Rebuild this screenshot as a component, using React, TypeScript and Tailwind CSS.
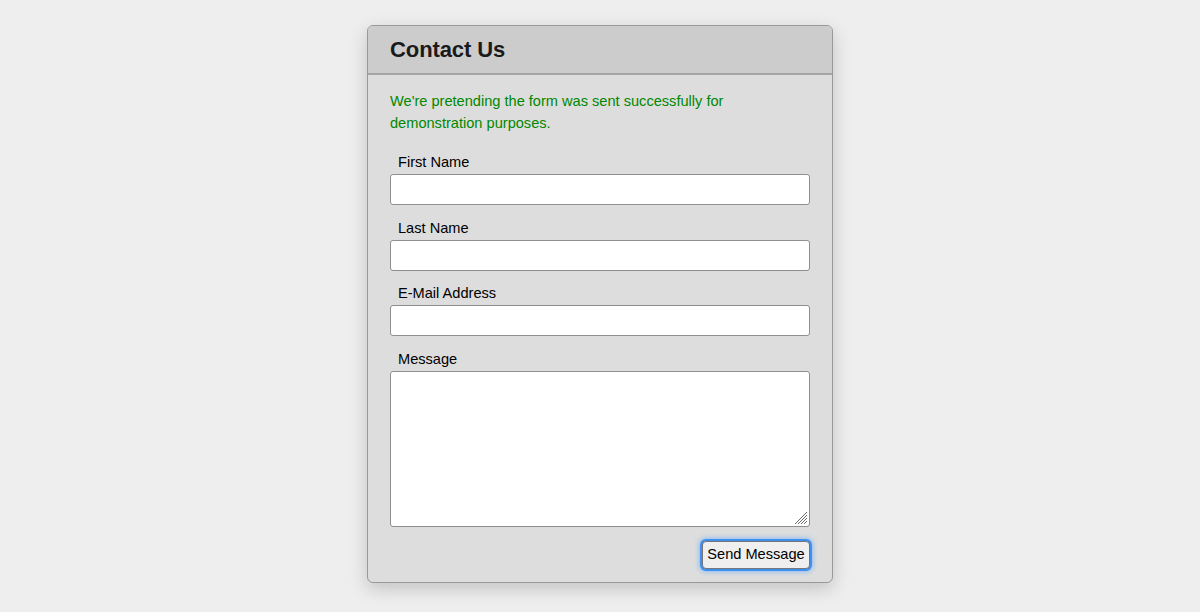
import React from "react";

export default function App() {
  const fields = ["First Name", "Last Name", "E-Mail Address"];
  return (
    <div className="min-h-[612px] w-full bg-[#eeeeee] pt-[25px] font-['Liberation_Sans',Arial,sans-serif] text-black">
      <div className="mx-auto w-[466px] overflow-hidden rounded-[6px] border border-[#999999] bg-[#dddddd] shadow-[0_6px_18px_rgba(0,0,0,0.18)]">
        <div className="flex h-[49px] items-center border-b-2 border-[#a5a5a5] bg-[#cccccc] px-[22px]">
          <h1 className="text-[22px] font-bold leading-none tracking-[-0.1px] text-[#1a1a1a]">Contact Us</h1>
        </div>
        <div className="px-[22px] pb-[13px] pt-[14.5px]">
          <p className="pr-[60px] text-[14.6px] leading-[22px] text-[#008800]">
            We're pretending the form was sent successfully for demonstration purposes.
          </p>
          <div className="mt-[18.5px] flex flex-col">
            {fields.map((f) => (
              <div key={f} className="mb-[12.5px] flex flex-col">
                <label className="mb-[3px] pl-[8px] pt-[1px] text-[14.6px] leading-[18px]">{f}</label>
                <input
                  type="text"
                  className="h-[31px] w-full rounded-[3px] border border-[#8f8f8f] bg-white px-2 text-[15px] outline-none"
                />
              </div>
            ))}
            <div className="flex flex-col">
              <label className="mb-[3px] pl-[8px] pt-[1px] text-[14.6px] leading-[18px]">Message</label>
              <div className="relative">
                <textarea className="block h-[156px] w-full resize-none rounded-[3px] border border-[#8f8f8f] bg-white px-2 text-[15px] outline-none" />
                <svg
                  className="pointer-events-none absolute bottom-[2px] right-[2px]"
                  width="14"
                  height="14"
                  viewBox="0 0 14 14"
                >
                  <g stroke="#6b6b6b" strokeWidth="1">
                    <line x1="1" y1="13" x2="13" y2="1" />
                    <line x1="4" y1="13" x2="13" y2="4" />
                    <line x1="7" y1="13" x2="13" y2="7" />
                    <line x1="10" y1="13" x2="13" y2="10" />
                  </g>
                </svg>
              </div>
            </div>
          </div>
          <div className="mt-[14px] flex justify-end">
            <button className="h-[28px] w-[108px] rounded-[4px] border border-[#767676] bg-[#efefef] text-[14.6px] leading-none text-black shadow-[0_0_0_2px_#3d8ff0,0_0_5px_3px_rgba(80,160,255,0.55)]">
              Send Message
            </button>
          </div>
        </div>
      </div>
    </div>
  );
}
